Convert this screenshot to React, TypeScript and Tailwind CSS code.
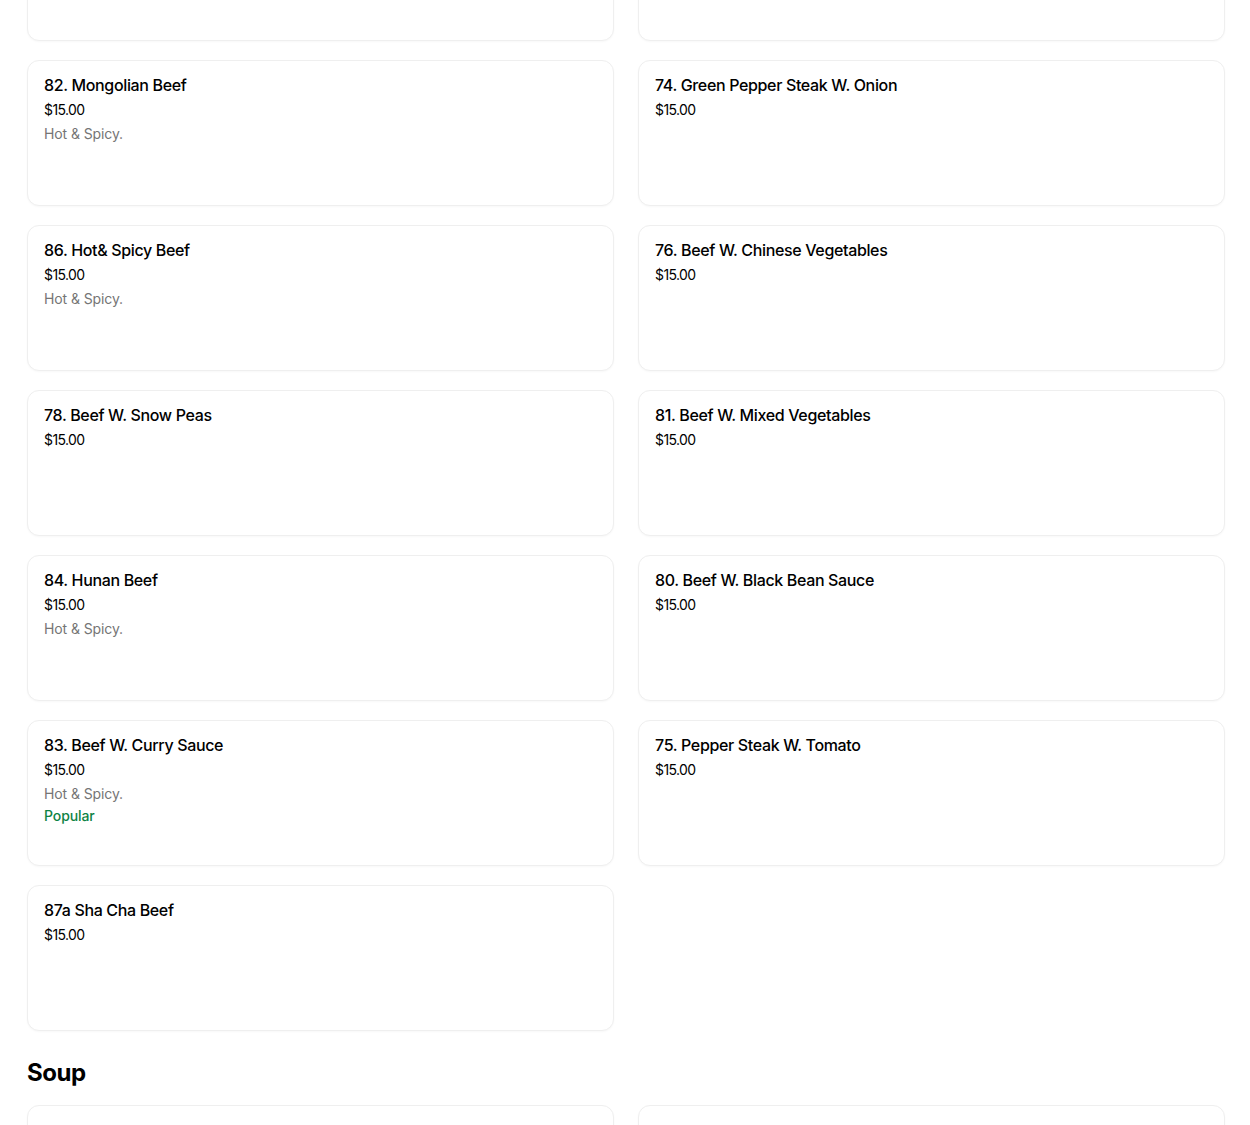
import React from "react";

type Item = { name: string; desc?: string; popular?: boolean };

const rows: (Item | null)[][] = [
  [{ name: "" }, { name: "" }],
  [{ name: "82. Mongolian Beef", desc: "Hot & Spicy." }, { name: "74. Green Pepper Steak W. Onion" }],
  [{ name: "86. Hot& Spicy Beef", desc: "Hot & Spicy." }, { name: "76. Beef W. Chinese Vegetables" }],
  [{ name: "78. Beef W. Snow Peas" }, { name: "81. Beef W. Mixed Vegetables" }],
  [{ name: "84. Hunan Beef", desc: "Hot & Spicy." }, { name: "80. Beef W. Black Bean Sauce" }],
  [{ name: "83. Beef W. Curry Sauce", desc: "Hot & Spicy.", popular: true }, { name: "75. Pepper Steak W. Tomato" }],
  [{ name: "87a Sha Cha Beef" }, null],
];

function Card({ item }: { item: Item }) {
  return (
    <div className="h-[146px] rounded-xl border border-[#efefef] bg-white px-[16px] pt-[15px] shadow-[0_1px_2px_rgba(0,0,0,0.03)]">
      {item.name && (
        <>
          <div className="text-[16px] leading-[18px] font-medium text-black tracking-[-0.35px]">{item.name}</div>
          <div className="mt-[6px] text-[14px] leading-5 text-black tracking-[-0.6px]">$15.00</div>
          {item.desc && <div className="mt-[4px] text-[14px] leading-5 text-[#757575] tracking-[-0.1px]">{item.desc}</div>}
          {item.popular && <div className="mt-[2px] text-[14px] leading-5 font-medium text-[#0e8345] tracking-[-0.1px]">Popular</div>}
        </>
      )}
    </div>
  );
}

export default function App() {
  return (
    <div className="h-[1125px] overflow-hidden bg-white" style={{ fontFamily: "Inter, 'Noto Sans', sans-serif" }}>
      <div className="-mt-[105px] px-[27px] pr-[25px]">
        <div className="grid grid-cols-2 gap-x-[24px] gap-y-[19px]">
          {rows.flatMap((r, i) =>
            r.map((it, j) => (it ? <Card key={`${i}-${j}`} item={it} /> : <div key={`${i}-${j}`} />))
          )}
        </div>
        <h2 className="mt-[26px] text-[24px] leading-8 font-bold text-black tracking-[-0.5px]">Soup</h2>
        <div className="mt-[16px] grid grid-cols-2 gap-x-[24px] gap-y-[19px]">
          <Card item={{ name: "" }} />
          <Card item={{ name: "" }} />
        </div>
      </div>
    </div>
  );
}
